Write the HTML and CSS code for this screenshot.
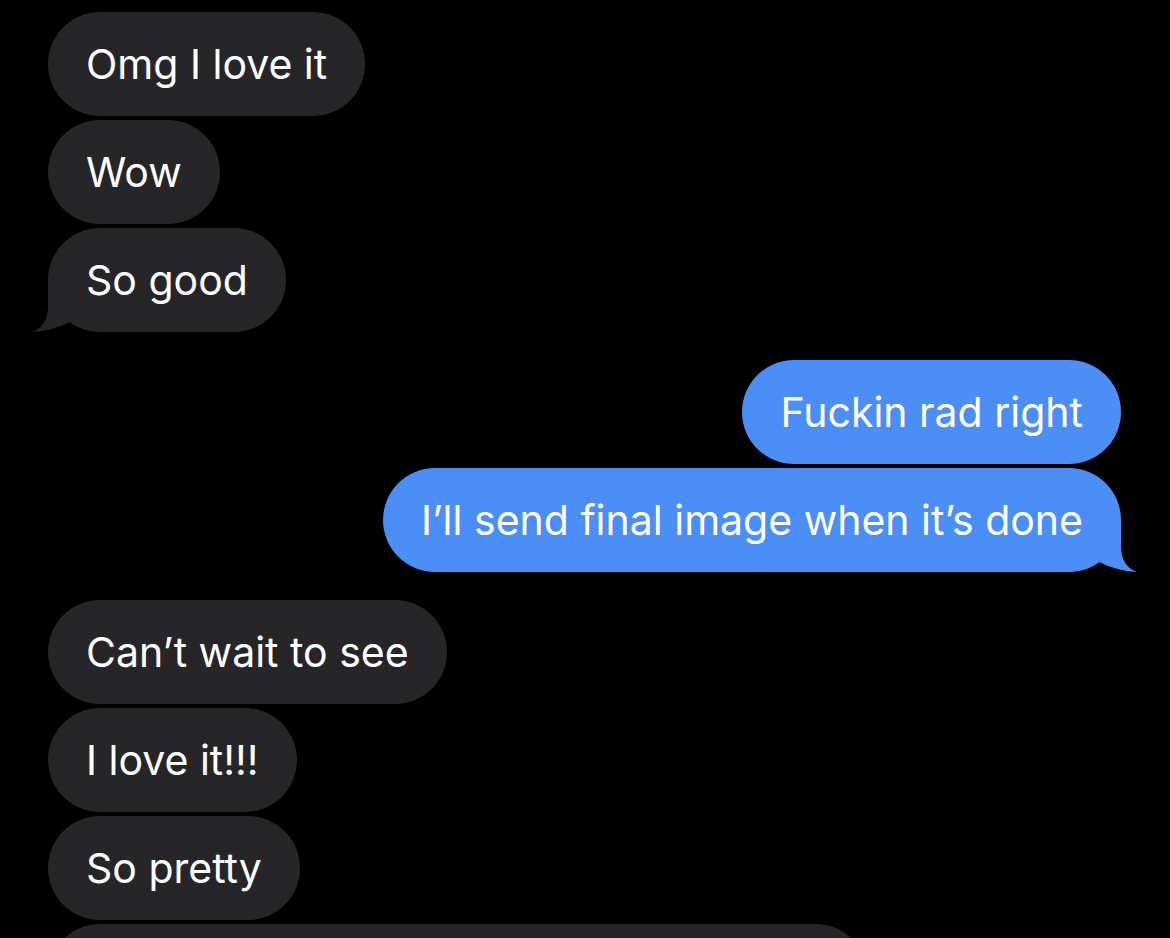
FILE: index.html
```html
<!DOCTYPE html>
<html lang="en">
<head>
<meta charset="utf-8">
<title>Messages</title>
<link rel="stylesheet" href="styles.css">
</head>
<body>
<div class="thread">
  <div class="group incoming">
    <div class="bubble">Omg I love it</div>
    <div class="bubble">Wow</div>
    <div class="bubble">So good<svg class="tail tail-left" width="38" height="52" viewBox="0 0 38 52"><path d="M16,0 L16,26 Q16,46 0,52 Q20,51 38,42 L38,0 Z"/></svg></div>
  </div>
  <div class="group outgoing">
    <div class="bubble">Fuckin rad right</div>
    <div class="bubble">I’ll send final image when it’s done<svg class="tail tail-right" width="38" height="52" viewBox="0 0 38 52"><path d="M22,0 L22,26 Q22,46 38,52 Q18,51 0,42 L0,0 Z"/></svg></div>
  </div>
  <div class="group incoming">
    <div class="bubble">Can’t wait to see</div>
    <div class="bubble">I love it!!!</div>
    <div class="bubble">So pretty</div>
    <div class="bubble partial"></div>
  </div>
</div>
</body>
</html>
```

FILE: styles.css
```css
html, body {
  margin: 0;
  padding: 0;
  background: #000;
  height: 100%;
  overflow: hidden;
}

.thread {
  display: flex;
  flex-direction: column;
  gap: 28px;
  padding: 12px 49px 0 48px;
  font-family: "Inter", "Liberation Sans", sans-serif;
  font-size: 41px;
  color: #fff;
}

.group {
  display: flex;
  flex-direction: column;
  gap: 4px;
}

.group.incoming {
  align-items: flex-start;
}

.group.outgoing {
  align-items: flex-end;
}

.bubble {
  position: relative;
  height: 104px;
  line-height: 104px;
  padding: 0 38px;
  border-radius: 52px;
  white-space: nowrap;
}

.incoming .bubble {
  background: #262629;
}

.outgoing .bubble {
  background: #4a8ef6;
}

.bubble.partial {
  width: 744px;
}

.tail {
  position: absolute;
  bottom: 0;
  display: block;
}

.tail-left {
  left: -16px;
  fill: #262629;
}

.tail-right {
  right: -16px;
  fill: #4a8ef6;
}
```
